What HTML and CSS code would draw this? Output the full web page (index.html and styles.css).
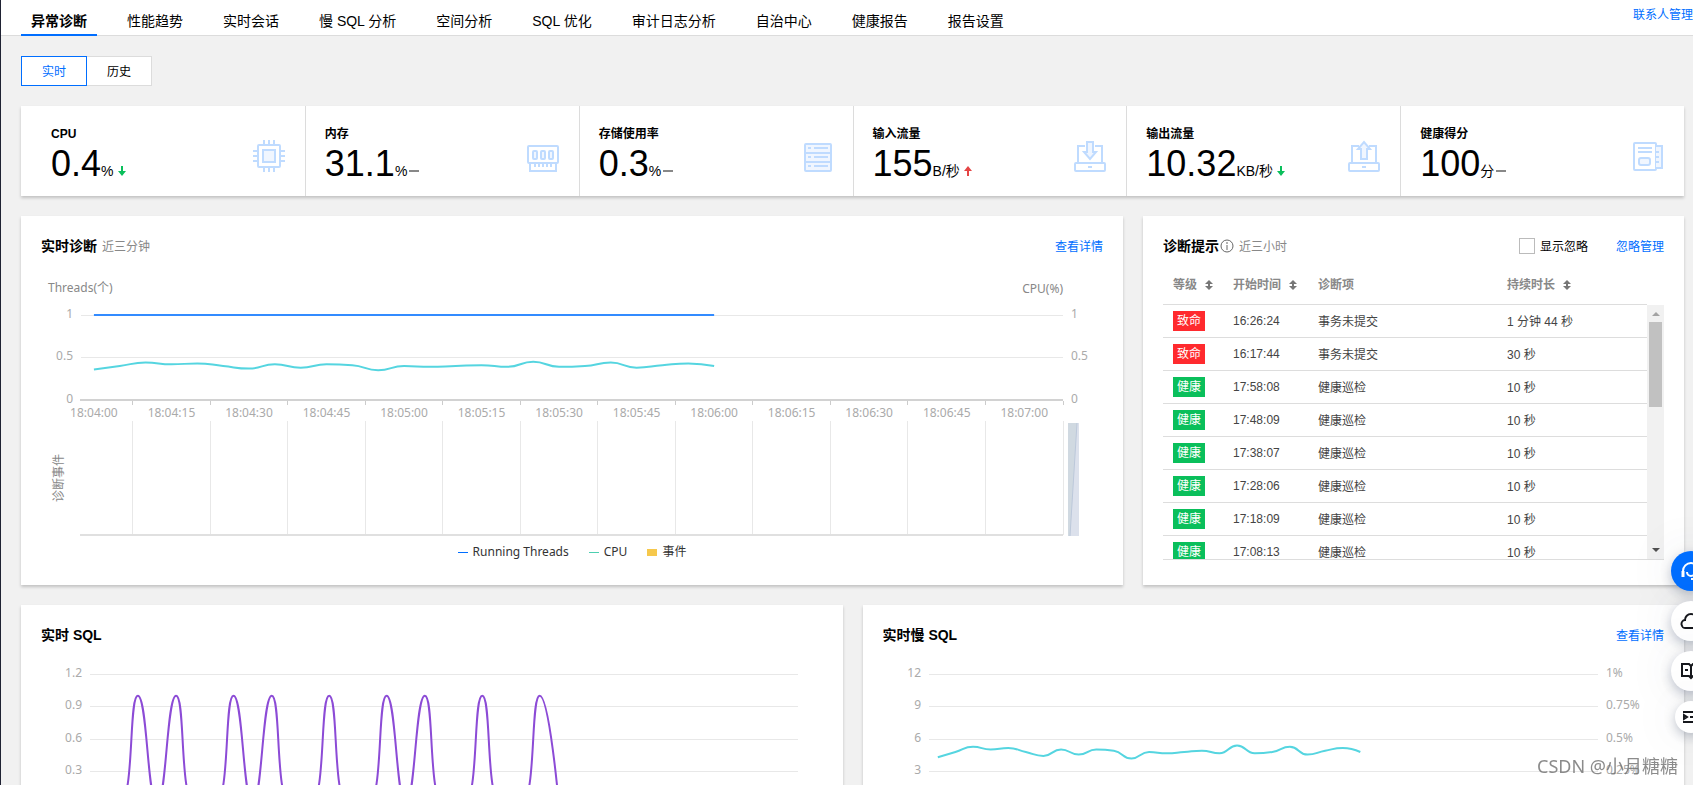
FILE: index.html
```html
<!DOCTYPE html>
<html lang="zh-CN">
<head>
    <meta charset="UTF-8">
    <meta name="viewport" content="width=device-width, initial-scale=1.0">
    <title>异常诊断</title>
    <link rel="stylesheet" href="styles.css">
</head>
<body>
    <header class="topbar">
        <nav class="tabs">
            <a class="tab active" href="#">异常诊断</a>
            <a class="tab" href="#">性能趋势</a>
            <a class="tab" href="#">实时会话</a>
            <a class="tab" href="#">慢 SQL 分析</a>
            <a class="tab" href="#">空间分析</a>
            <a class="tab" href="#">SQL 优化</a>
            <a class="tab" href="#">审计日志分析</a>
            <a class="tab" href="#">自治中心</a>
            <a class="tab" href="#">健康报告</a>
            <a class="tab" href="#">报告设置</a>
        </nav>
        <a class="contact" href="#">联系人管理</a>
    </header>

    <main>
        <div class="segment">
            <button class="seg active" type="button">实时</button>
            <button class="seg" type="button">历史</button>
        </div>

        <section class="stats">
            <div class="stat">
                <div>
                    <h3>CPU</h3>
                    <p class="value">0.4<span class="unit">%</span><svg class="trend down" width="8" height="10" viewBox="0 0 8 10"><path d="M3 0h2v5h3L4 10 0 5h3z"/></svg></p>
                </div>
                <svg class="icon" viewBox="0 0 32 32">
                    <rect x="5" y="5" width="22" height="22" rx="1"/>
                    <rect class="tint" x="10" y="10" width="12" height="12"/>
                    <path d="M11 0v4M16 0v4M21 0v4M11 28v4M16 28v4M21 28v4M0 11h4M0 16h4M0 21h4M28 11h4M28 16h4M28 21h4"/>
                </svg>
            </div>
            <div class="stat">
                <div>
                    <h3>内存</h3>
                    <p class="value">31.1<span class="unit">%</span><span class="flat"></span></p>
                </div>
                <svg class="icon" viewBox="0 0 32 32">
                    <rect x="1" y="6" width="30" height="17" rx="1"/>
                    <rect class="tint" x="6" y="11" width="4" height="8" rx="1"/>
                    <rect class="tint" x="14" y="11" width="4" height="8" rx="1"/>
                    <rect class="tint" x="22" y="11" width="4" height="8" rx="1"/>
                    <path d="M3 23v8h26v-8M8 23v4M12 23v4M16 23v4M20 23v4M24 23v4"/>
                </svg>
            </div>
            <div class="stat">
                <div>
                    <h3>存储使用率</h3>
                    <p class="value">0.3<span class="unit">%</span><span class="flat"></span></p>
                </div>
                <svg class="icon" viewBox="0 0 32 32">
                    <rect class="tint" x="4" y="4" width="26" height="27" rx="1"/>
                    <path d="M4 13h26M4 22h26M7 8h3M13 8h14M7 17h3M13 17h14M7 26h3M13 26h14"/>
                </svg>
            </div>
            <div class="stat">
                <div>
                    <h3>输入流量</h3>
                    <p class="value">155<span class="unit">B/秒</span><svg class="trend up" width="8" height="10" viewBox="0 0 8 10"><path d="M3 10h2V5h3L4 0 0 5h3z"/></svg></p>
                </div>
                <svg class="icon" viewBox="0 0 32 32">
                    <path d="M11 6H4v17h24V6h-7"/>
                    <rect x="1" y="23" width="30" height="8" rx="1"/>
                    <path d="M14 27h4"/>
                    <path class="tint" d="M13 2h6v10h3l-6 7-6-7h3z"/>
                </svg>
            </div>
            <div class="stat">
                <div>
                    <h3>输出流量</h3>
                    <p class="value">10.32<span class="unit">KB/秒</span><svg class="trend down" width="8" height="10" viewBox="0 0 8 10"><path d="M3 0h2v5h3L4 10 0 5h3z"/></svg></p>
                </div>
                <svg class="icon" viewBox="0 0 32 32">
                    <path d="M11 6H4v17h24V6h-7"/>
                    <rect x="1" y="23" width="30" height="8" rx="1"/>
                    <path d="M14 27h4"/>
                    <path class="tint" d="M13 19h6V9h3l-6-7-6 7h3z"/>
                </svg>
            </div>
            <div class="stat">
                <div>
                    <h3>健康得分</h3>
                    <p class="value">100<span class="unit">分</span><span class="flat"></span></p>
                </div>
                <svg class="icon" viewBox="0 0 32 32">
                    <rect x="2" y="3" width="22" height="27" rx="1"/>
                    <path d="M6 8h14M6 12h14"/>
                    <rect class="tint" x="7" y="18" width="11" height="7" rx="2"/>
                    <path class="tint" d="M24 6h6v22h-6"/>
                    <path d="M24 12h3M24 17h3M24 22h3"/>
                </svg>
            </div>
        </section>

        <div class="cards">
            <section class="card wide">
                <div class="card-head">
                    <h2>实时诊断</h2>
                    <span class="sub">近三分钟</span>
                    <a class="more" href="#">查看详情</a>
                </div>
                <svg class="chart chart-tall" id="diagnosis-chart"></svg>
                <div class="legend">
                    <span class="legend-item"><i class="line blue"></i>Running Threads</span>
                    <span class="legend-item"><i class="line cyan"></i>CPU</span>
                    <span class="legend-item"><i class="block"></i>事件</span>
                </div>
            </section>

            <section class="card narrow">
                <div class="card-head">
                    <h2>诊断提示</h2>
                    <svg class="info" width="14" height="14" viewBox="0 0 14 14"><circle cx="7" cy="7" r="6"/><path d="M7 6v5M7 3v2"/></svg>
                    <span class="sub">近三小时</span>
                    <span class="ignore"><input type="checkbox" id="show-ignored"><label for="show-ignored">显示忽略</label></span>
                    <a class="manage" href="#">忽略管理</a>
                </div>
                <div class="scroll">
                    <table class="tips">
                        <colgroup>
                            <col class="col-level">
                            <col class="col-start">
                            <col>
                            <col class="col-duration">
                        </colgroup>
                        <thead>
                            <tr>
                                <th>等级<svg class="sort" width="8" height="10" viewBox="0 0 8 10"><path d="M4 0l4 4H5v2h3l-4 4-4-4h3V4H0z"/></svg></th>
                                <th>开始时间<svg class="sort" width="8" height="10" viewBox="0 0 8 10"><path d="M4 0l4 4H5v2h3l-4 4-4-4h3V4H0z"/></svg></th>
                                <th>诊断项</th>
                                <th>持续时长<svg class="sort" width="8" height="10" viewBox="0 0 8 10"><path d="M4 0l4 4H5v2h3l-4 4-4-4h3V4H0z"/></svg></th>
                            </tr>
                        </thead>
                        <tbody>
                            <tr><td><span class="badge fatal">致命</span></td><td>16:26:24</td><td>事务未提交</td><td>1 分钟 44 秒</td></tr>
                            <tr><td><span class="badge fatal">致命</span></td><td>16:17:44</td><td>事务未提交</td><td>30 秒</td></tr>
                            <tr><td><span class="badge ok">健康</span></td><td>17:58:08</td><td>健康巡检</td><td>10 秒</td></tr>
                            <tr><td><span class="badge ok">健康</span></td><td>17:48:09</td><td>健康巡检</td><td>10 秒</td></tr>
                            <tr><td><span class="badge ok">健康</span></td><td>17:38:07</td><td>健康巡检</td><td>10 秒</td></tr>
                            <tr><td><span class="badge ok">健康</span></td><td>17:28:06</td><td>健康巡检</td><td>10 秒</td></tr>
                            <tr><td><span class="badge ok">健康</span></td><td>17:18:09</td><td>健康巡检</td><td>10 秒</td></tr>
                            <tr><td><span class="badge ok">健康</span></td><td>17:08:13</td><td>健康巡检</td><td>10 秒</td></tr>
                        </tbody>
                    </table>
                    <div class="scrollbar">
                        <svg width="17" height="17" viewBox="0 0 17 17"><path fill="#a3a3a3" d="M5 11l4-4 4 4z"/></svg>
                        <div class="thumb"></div>
                        <svg class="arrow-down" width="17" height="17" viewBox="0 0 17 17"><path fill="#505050" d="M5 6l4 4 4-4z"/></svg>
                    </div>
                </div>
            </section>

            <section class="card half">
                <div class="card-head">
                    <h2>实时 SQL</h2>
                </div>
                <svg class="chart" id="sql-chart"></svg>
            </section>

            <section class="card half">
                <div class="card-head">
                    <h2>实时慢 SQL</h2>
                    <a class="more" href="#">查看详情</a>
                </div>
                <svg class="chart" id="slow-chart"></svg>
            </section>
        </div>
    </main>

    <aside class="float">
        <button class="round primary" type="button" aria-label="客服">
            <svg width="24" height="24" viewBox="0 0 24 24"><path d="M4 15v-3a8 8 0 0 1 16 0v3M8 13a4 4 0 0 0 8 0M12 20h5a3 3 0 0 0 3-3"/><path d="M4 12v6M20 12v6" stroke-width="3"/></svg>
        </button>
        <button class="round" type="button" aria-label="云服务">
            <svg width="24" height="24" viewBox="0 0 24 24"><path d="M7 19a4 4 0 0 1-1-8 6 6 0 0 1 12 0 4 4 0 0 1-1 8z"/></svg>
        </button>
        <button class="round" type="button" aria-label="文档">
            <svg width="24" height="24" viewBox="0 0 24 24"><path d="M3 5h7l2 2 2-2h7v12h-7l-2 2-2-2H3zM12 7v12M6 11h3"/></svg>
        </button>
        <button class="round small" type="button" aria-label="收起">
            <svg width="18" height="18" viewBox="0 0 18 18"><path d="M1 4h16M8 9h9M1 14h16"/><path d="M2 7l3 2-3 2z"/></svg>
        </button>
    </aside>
    <div class="watermark">CSDN @小月糖糖</div>

    <script src="charts.js"></script>
</body>
</html>
```
FILE: styles.css
```css
* {
    box-sizing: border-box;
}
body {
    margin: 0;
    height: 100vh;
    overflow: hidden;
    position: relative;
    border-left: 1px solid #1f2233;
    background-color: #f1f1f1;
    color: #000;
    font: 12px/20px "Liberation Sans", "Noto Sans CJK SC", sans-serif;
}
/* selected entry of the collapsed side menu */
body::before {
    content: "";
    position: absolute;
    left: -1px;
    top: 122px;
    width: 1px;
    height: 38px;
    background-color: #006eff;
}
h2, h3, p {
    margin: 0;
}
a {
    color: #006eff;
    text-decoration: none;
}
button {
    font: inherit;
    cursor: pointer;
}

.topbar {
    display: flex;
    justify-content: space-between;
    height: 36px;
    background-color: #fff;
    border-bottom: 1px solid #dcdcdc;
}
.tabs {
    display: flex;
    gap: 20px;
    padding-left: 20px;
}
.tab {
    height: 36px;
    padding: 11px 10px 0;
    color: #000;
    font-size: 14px;
    white-space: nowrap;
}
.tab.active {
    font-weight: bold;
    border-bottom: 2px solid #006eff;
}
.contact {
    padding-top: 5px;
    white-space: nowrap;
}

main {
    padding: 20px 9px 20px 20px;
}
.segment {
    display: flex;
    margin-bottom: 20px;
}
.seg {
    height: 30px;
    padding: 2px 20px 0;
    border: 1px solid #dcdcdc;
    background-color: #fff;
    color: #000;
}
.seg + .seg {
    border-left: 0;
}
.seg.active {
    border-color: #006eff;
    color: #006eff;
}

.stats {
    display: grid;
    grid-template-columns: calc((100% - 20px) / 6 + 10px) repeat(4, 1fr) calc((100% - 20px) / 6 + 10px);
    margin-bottom: 20px;
    background-color: #fff;
    box-shadow: 0 2px 3px rgba(0, 0, 0, 0.2);
}
.stat {
    display: flex;
    justify-content: space-between;
    align-items: flex-end;
    padding: 18px 20px 12px 19px;
    border-left: 1px solid #dcdcdc;
}
.stat:first-child {
    padding-left: 30px;
    border-left: 0;
}
.stat h3 {
    font-size: 12px;
}
.value {
    display: flex;
    align-items: baseline;
    height: 40px;
    font-size: 36px;
    line-height: 40px;
    white-space: nowrap;
}
.unit {
    font-size: 14px;
}
.trend {
    margin-left: 4px;
}
.trend.down {
    fill: #0abf5b;
}
.trend.up {
    fill: #e54545;
}
.flat {
    width: 10px;
    height: 6px;
    margin-left: 2px;
    border-top: 2px solid #888;
}
.icon {
    width: 32px;
    height: 32px;
    margin-bottom: 12px;
    fill: none;
    stroke: #bfdbff;
    stroke-width: 2;
}
.icon .tint {
    fill: #f0f6ff;
}

.cards {
    display: grid;
    grid-template-columns: repeat(6, minmax(0, 1fr));
    gap: 20px;
}
.card {
    padding: 20px;
    background-color: #fff;
    box-shadow: 0 2px 3px rgba(0, 0, 0, 0.2);
}
.wide {
    grid-column: span 4;
}
.narrow {
    grid-column: span 2;
}
.half {
    grid-column: span 3;
}
.card-head {
    display: flex;
    align-items: center;
    height: 20px;
    white-space: nowrap;
}
.card-head h2 {
    font-size: 14px;
}
.sub, .more, .manage, .ignore label {
    padding-top: 2px;
}
.sub {
    margin-left: 5px;
    color: #888;
}
.more {
    margin-left: auto;
}
.info {
    margin-left: 1px;
    fill: none;
    stroke: #666;
}
.ignore {
    display: flex;
    align-items: center;
    gap: 5px;
    margin: 0 28px 0 auto;
}
.ignore input {
    appearance: none;
    width: 16px;
    height: 16px;
    margin: 0;
    border: 1px solid #bbb;
    background-color: #fff;
}

/* charts */
.chart {
    display: block;
    width: 100%;
    height: 180px;
}
.chart-tall {
    height: 286px;
}
.chart text, .legend {
    font-family: "Noto Sans", "Noto Sans CJK SC", sans-serif;
    font-size: 12px;
}
.chart text {
    fill: #aaa;
}
.chart .axis-name {
    fill: #888;
}
.legend {
    display: flex;
    justify-content: center;
    gap: 20px;
    padding-bottom: 3px;
    color: #333;
}
.legend-item {
    display: flex;
    align-items: center;
    gap: 5px;
}
.line {
    width: 10px;
    height: 1px;
}
.line.blue {
    background-color: #006eff;
}
.line.cyan {
    background-color: #4dcfb0;
}
.block {
    width: 10px;
    height: 7px;
    background-color: #f6c84c;
}

/* diagnosis list */
.scroll {
    display: flex;
    align-items: flex-start;
    height: 294px;
    margin-top: 10px;
    overflow: hidden;
    border-bottom: 1px solid #ddd;
}
.tips {
    flex: 1;
    table-layout: fixed;
    border-collapse: separate;
    border-spacing: 0;
}
.col-level {
    width: 60px;
}
.col-start {
    width: 85px;
}
.col-duration {
    width: 150px;
}
.tips th, .tips td {
    height: 33px;
    padding: 0 10px;
    border-bottom: 1px solid #ddd;
    text-align: left;
    white-space: nowrap;
    color: #444;
}
.tips th {
    height: 39px;
    color: #888;
}
.tips td:nth-child(n + 3) {
    padding-top: 2px;
}
.sort {
    margin-left: 8px;
    vertical-align: -1px;
    fill: #777;
}
.badge {
    display: block;
    width: 32px;
    height: 20px;
    color: #fff;
    text-align: center;
}
.fatal {
    background-color: #ff2a2e;
}
.ok {
    background-color: #0abf5b;
}
.scrollbar {
    display: flex;
    flex-direction: column;
    align-items: center;
    width: 17px;
    height: 254px;
    margin-top: 39px;
    background-color: #f1f1f1;
}
.thumb {
    width: 13px;
    height: 85px;
    background-color: #c1c1c1;
}
.arrow-down {
    margin-top: auto;
}

/* buttons floating over the right edge */
.float {
    position: fixed;
    right: -18px;
    top: 551px;
    display: flex;
    flex-direction: column;
    align-items: center;
    gap: 10px;
}
.round {
    display: flex;
    align-items: center;
    justify-content: center;
    width: 40px;
    height: 40px;
    padding: 0;
    border: 0;
    border-radius: 50%;
    background-color: #fff;
    box-shadow: 0 4px 12px rgba(54, 68, 99, 0.3), 0 0 50px rgba(54, 68, 99, 0.1);
}
.round svg {
    fill: none;
    stroke: #16181d;
    stroke-width: 2;
}
.round.primary {
    background-color: #006eff;
}
.round.primary svg {
    stroke: #fff;
}
.round.small {
    width: 32px;
    height: 32px;
}
.watermark {
    position: fixed;
    right: 15px;
    bottom: 6px;
    color: rgba(110, 110, 110, 0.8);
    font: 18px/26px "Noto Sans", "Noto Sans CJK SC", sans-serif;
}
```
FILE: charts.js
```js
const NS = 'http://www.w3.org/2000/svg';

const cpu = [0.36, 0.40, 0.44, 0.42, 0.43, 0.40, 0.37, 0.42, 0.38, 0.42, 0.41, 0.35, 0.40,
    0.39, 0.40, 0.41, 0.39, 0.45, 0.39, 0.40, 0.44, 0.38, 0.41, 0.43, 0.40];
const threads = cpu.map(() => 1);
const sql = [0, 0, 1, 0, 1, 0, 0, 1, 0, 1, 0, 0, 1, 0, 0, 1, 0, 1, 0, 0, 1, 0, 0, 1, 0];
const times = ['18:04:00', '18:04:15', '18:04:30', '18:04:45', '18:05:00', '18:05:15', '18:05:30',
    '18:05:45', '18:06:00', '18:06:15', '18:06:30', '18:06:45', '18:07:00'];

function add(svg, name, attrs, text) {
    const el = document.createElementNS(NS, name);
    for (const key in attrs) el.setAttribute(key, attrs[key]);
    if (text) el.textContent = text;
    svg.appendChild(el);
}

function hline(svg, x1, x2, y, color, width) {
    add(svg, 'rect', { x: x1, y: y, width: x2 - x1, height: width, fill: color });
}

function vline(svg, x, y1, y2, color) {
    add(svg, 'rect', { x: Math.floor(x), y: y1, width: 1, height: y2 - y1, fill: color });
}

const clamp = (v, a, b) => Math.max(Math.min(v, Math.max(a, b)), Math.min(a, b));

// Smooth line whose control points never overshoot the neighbouring values
function smoothPath(p) {
    let d = `M${p[0].x} ${p[0].y}`;
    let out = p[0];
    for (let i = 1; i < p.length; i++) {
        const prev = p[i - 1], cur = p[i], next = p[i + 1];
        let cin = cur, nextOut = cur;
        if (next) {
            const lp = Math.hypot(cur.x - prev.x, cur.y - prev.y);
            const ln = Math.hypot(next.x - cur.x, next.y - cur.y);
            const r = 0.5 * ln / (lp + ln);
            const ox = clamp(cur.x + (next.x - prev.x) * r, cur.x, next.x);
            const oy = clamp(cur.y + (next.y - prev.y) * r, cur.y, next.y);
            cin = {
                x: clamp(cur.x - (ox - cur.x) * lp / ln, prev.x, cur.x),
                y: clamp(cur.y - (oy - cur.y) * lp / ln, prev.y, cur.y)
            };
            nextOut = {
                x: cur.x + (cur.x - cin.x) * ln / lp,
                y: cur.y + (cur.y - cin.y) * ln / lp
            };
        }
        d += `C${out.x} ${out.y} ${cin.x} ${cin.y} ${cur.x} ${cur.y}`;
        out = nextOut;
    }
    return d;
}

// box: left, right, top and bottom of the plot; slots: number of categories
function series(svg, data, box, slots, color) {
    const step = (box.right - box.left) / slots;
    const points = data.map((v, i) => ({
        x: box.left + step * (i + 0.5),
        y: box.bottom - v * (box.bottom - box.top)
    }));
    add(svg, 'path', { d: smoothPath(points), fill: 'none', stroke: color, 'stroke-width': 2 });
}

function yAxis(svg, box, left, right, count) {
    const step = (box.bottom - box.top) / count;
    left.forEach((label, i) => {
        const y = Math.floor(box.top + step * i);
        hline(svg, box.left, box.right, y, '#e8e8e8', 1);
        add(svg, 'text', { x: box.left - 8, y: y + 3, 'text-anchor': 'end' }, label);
        if (right) add(svg, 'text', { x: box.right + 8, y: y + 3 }, right[i]);
    });
}

function drawDiagnosis() {
    const svg = document.getElementById('diagnosis-chart');
    const w = svg.clientWidth;
    svg.replaceChildren();
    const box = { left: 40, right: w - 40, top: 59, bottom: 144 };
    const labels = ['1', '0.5', '0'];
    yAxis(svg, box, labels, labels, 2);
    hline(svg, box.left - 1, box.right, 143, '#d2d2d2', 2);
    add(svg, 'text', { x: 7, y: 36, class: 'axis-name' }, 'Threads(个)');
    add(svg, 'text', { x: box.right, y: 37, class: 'axis-name', 'text-anchor': 'end' }, 'CPU(%)');

    const slot = (box.right - box.left) / 38;
    times.forEach((time, i) => {
        const x = box.left + slot * (i * 3 + 0.5);
        add(svg, 'text', { x: x, y: 161, 'text-anchor': 'middle' }, time);
        // the last tick closes the plot
        const tick = Math.min(x + slot * 1.5, box.right);
        vline(svg, tick, 145, 149, '#ccc');
        vline(svg, tick, 165, 279, '#e8e8e8');
    });
    hline(svg, box.left - 1, box.right, 278, '#e0e0e0', 2);
    add(svg, 'text', { transform: 'translate(22 222) rotate(-90)', class: 'axis-name', 'text-anchor': 'middle' }, '诊断事件');

    // zoom slider
    const s = box.right + 5;
    add(svg, 'rect', { x: s, y: 167, width: 11, height: 113, fill: '#dce1ec' });
    add(svg, 'path', { d: `M${s} 167h9l-7 113h-2z`, fill: '#d0d9e1' });
    add(svg, 'path', { d: `M${s + 9} 167l-7 113`, stroke: '#bcc8da', fill: 'none' });

    series(svg, threads, box, 38, '#338bff');
    series(svg, cpu, box, 38, '#55d5e0');
}

function drawSql() {
    const svg = document.getElementById('sql-chart');
    svg.replaceChildren();
    const box = { left: 49, right: svg.clientWidth - 25, top: 29, bottom: 159 };
    yAxis(svg, box, ['1.2', '0.9', '0.6', '0.3'], null, 4);
    series(svg, sql.map(v => v / 1.2), box, 37, '#8c4bd6');
}

function drawSlow() {
    const svg = document.getElementById('slow-chart');
    svg.replaceChildren();
    const box = { left: 46, right: svg.clientWidth - 67, top: 29, bottom: 159 };
    yAxis(svg, box, ['12', '9', '6', '3'], ['1%', '0.75%', '0.5%', '0.25%'], 4);
    series(svg, cpu, box, 38, '#55d5e0');
}

function draw() {
    drawDiagnosis();
    drawSql();
    drawSlow();
}

draw();
window.addEventListener('resize', draw);
```
